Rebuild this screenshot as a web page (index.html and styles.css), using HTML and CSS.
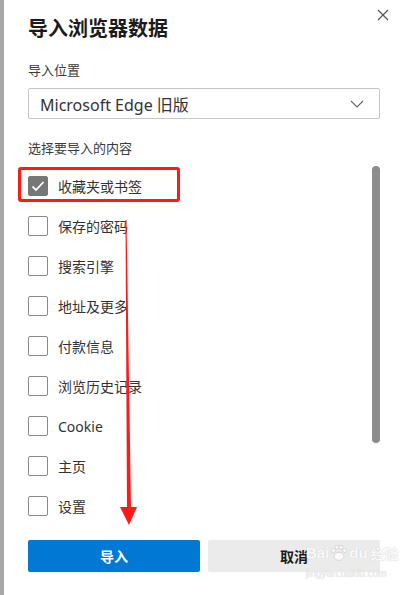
FILE: index.html
```html
<!DOCTYPE html>
<html lang="zh-CN">
<head>
    <meta charset="UTF-8">
    <meta name="viewport" content="width=device-width, initial-scale=1.0">
    <title>导入浏览器数据</title>
    <link rel="stylesheet" href="styles.css">
</head>
<body>
<div class="backdrop"></div>
<div class="dialog">
    <button class="close" type="button" aria-label="关闭">
        <svg width="12" height="12" viewBox="0 0 12 12"><path d="M1 1L11 11M11 1L1 11" stroke="#555" stroke-width="1.2" fill="none"/></svg>
    </button>
    <h1>导入浏览器数据</h1>

    <div class="section-label">导入位置</div>
    <div class="select">
        <span>Microsoft Edge 旧版</span>
        <svg width="14" height="8" viewBox="0 0 14 8"><path d="M1 1L7 7L13 1" stroke="#666" stroke-width="1.1" fill="none"/></svg>
    </div>

    <div class="section-label second">选择要导入的内容</div>
    <div class="list-wrap">
        <ul class="items">
            <li><span class="box checked"><svg width="14" height="12" viewBox="0 0 14 12"><path d="M1.5 6.5L5 10L12.5 2" stroke="#fff" stroke-width="1.8" fill="none"/></svg></span>收藏夹或书签</li>
            <li><span class="box"></span>保存的密码</li>
            <li><span class="box"></span>搜索引擎</li>
            <li><span class="box"></span>地址及更多</li>
            <li><span class="box"></span>付款信息</li>
            <li><span class="box"></span>浏览历史记录</li>
            <li><span class="box"></span>Cookie</li>
            <li><span class="box"></span>主页</li>
            <li><span class="box"></span>设置</li>
        </ul>
        <div class="track"><div class="thumb"></div></div>
    </div>

    <div class="actions">
        <button class="btn primary" type="button">导入</button>
        <button class="btn secondary" type="button">取消</button>
    </div>

    <!-- annotation drawn over the screenshot -->
    <div class="highlight"></div>
    <svg class="arrow" width="40" height="320" viewBox="0 0 40 320">
        <polygon points="21.5,0 22.5,0 27,288 23,288" fill="#ff1a1a"/>
        <polygon points="16,287 33,287 25,305" fill="#ff1a1a"/>
    </svg>

    <div class="watermark">
        <div class="wm-logo">
            <span>Bai</span>
            <svg width="18" height="18" viewBox="0 0 22 22"><g fill="#fafafa" stroke="#d0d0d0" stroke-width="1"><ellipse cx="11" cy="15" rx="6" ry="5"/><circle cx="4" cy="8" r="2.5"/><circle cx="8.5" cy="4" r="2.5"/><circle cx="13.5" cy="4" r="2.5"/><circle cx="18" cy="8" r="2.5"/></g></svg>
            <span>du</span>
            <span class="wm-cn">经验</span>
        </div>
        <div class="wm-url">jingyan.baidu.com</div>
    </div>
</div>
</body>
</html>
```

FILE: styles.css
```css
body {
    margin: 0;
    display: flex;
    height: 595px;
    overflow: hidden;
    font-family: "Noto Sans", "Noto Sans CJK SC", sans-serif;
    background: #ffffff;
}
.backdrop {
    width: 4px;
    background: #a7a7a7;
    flex-shrink: 0;
}
.dialog {
    position: relative;
    flex: 1;
    padding: 15px 23px 0 24px;
    background: #ffffff;
}
.close {
    position: absolute;
    top: 8px;
    right: 13px;
    width: 14px;
    height: 14px;
    padding: 0;
    border: none;
    background: none;
    display: flex;
    align-items: center;
    justify-content: center;
}
h1 {
    margin: 0;
    font-size: 20px;
    line-height: 28px;
    font-weight: bold;
    color: #1b1b1b;
}
.section-label {
    margin-top: 17px;
    font-size: 13px;
    line-height: 20px;
    color: #3b3b3b;
}
.section-label.second {
    margin-top: 19px;
}
.select {
    margin-top: 8px;
    height: 31px;
    box-sizing: border-box;
    border: 1px solid #c6c6c6;
    border-radius: 2px;
    display: flex;
    align-items: center;
    justify-content: space-between;
    padding: 0 15px 0 11px;
    font-size: 16px;
    color: #333;
}
.list-wrap {
    margin-top: 8px;
    display: flex;
}
.items {
    flex: 1;
    list-style: none;
    margin: 0;
    padding: 0;
}
.items li {
    height: 40px;
    display: flex;
    align-items: center;
    gap: 10px;
    font-size: 14px;
    color: #333;
}
.box {
    width: 20px;
    height: 20px;
    box-sizing: border-box;
    border: 1px solid #8a8a8a;
    border-radius: 2px;
    display: flex;
    align-items: center;
    justify-content: center;
}
.box.checked {
    background: #777777;
    border-color: #777777;
}
.track {
    width: 8px;
}
.thumb {
    height: 277px;
    background: #8c8c8c;
    border-radius: 4px;
}
.actions {
    margin-top: 14px;
    display: flex;
    gap: 8px;
}
.btn {
    flex: 1;
    height: 32px;
    border: none;
    border-radius: 2px;
    font-family: "Noto Sans CJK SC", sans-serif;
    font-size: 14px;
    font-weight: bold;
}
.primary {
    background: #0078d4;
    color: #ffffff;
}
.secondary {
    background: #ebebeb;
    color: #1b1b1b;
}
.highlight {
    position: absolute;
    left: 14px;
    top: 167px;
    width: 162px;
    height: 35px;
    box-sizing: border-box;
    border: 3px solid #ff1a1a;
    border-radius: 3px;
}
.arrow {
    position: absolute;
    left: 100px;
    top: 220px;
}
.watermark {
    position: absolute;
    left: 302px;
    top: 543px;
    white-space: nowrap;
    color: #fafafa;
    pointer-events: none;
}
.wm-logo {
    display: flex;
    align-items: center;
    gap: 1px;
    font-family: "Liberation Sans", sans-serif;
    font-size: 15px;
    line-height: 20px;
    font-weight: bold;
    text-shadow: 0 0 1px #c4c4c4;
}
.wm-cn {
    margin-left: 2px;
    font-family: "Noto Sans CJK SC", sans-serif;
    font-size: 14px;
}
.wm-url {
    margin-top: 5px;
    font-family: "Liberation Sans", sans-serif;
    font-size: 10px;
    line-height: 12px;
    color: #f0f0f0;
    text-shadow: 0 0 1px #c8c8c8;
}
```
